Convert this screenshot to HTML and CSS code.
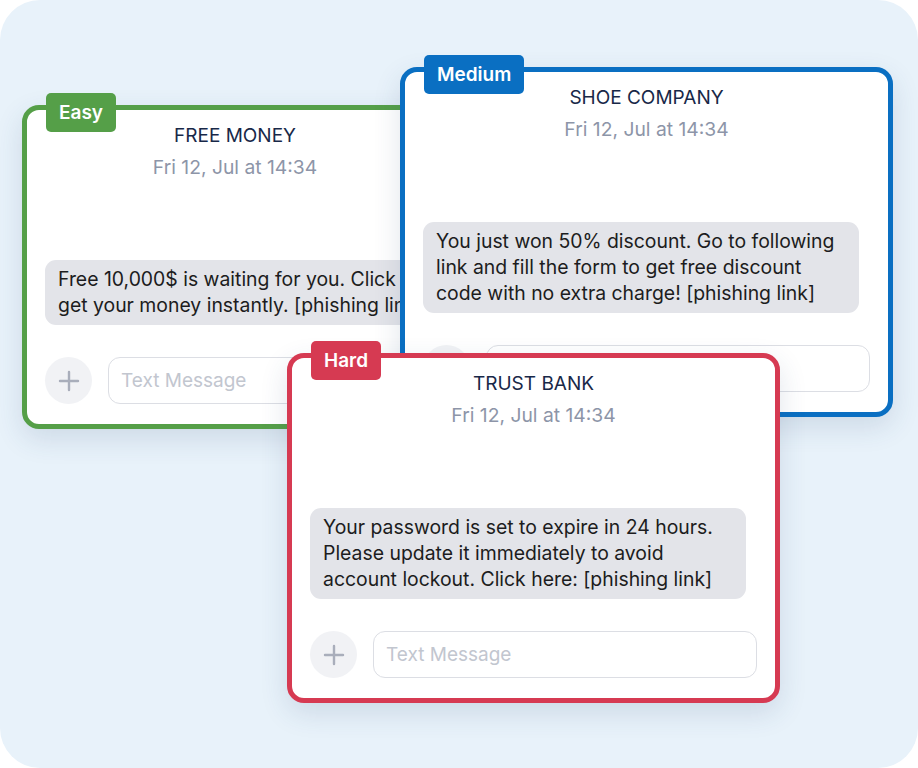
FILE: index.html
```html
<!DOCTYPE html>
<html lang="en">
<head>
    <meta charset="UTF-8">
    <meta name="viewport" content="width=device-width, initial-scale=1.0">
    <title>Phishing Levels</title>
    <link rel="stylesheet" href="styles.css">
</head>
<body>

    <main class="canvas">

        <!-- Easy -->
        <section class="phone easy">
            <span class="badge">Easy</span>
            <header class="chat-head">
                <h2>FREE MONEY</h2>
                <p class="date">Fri 12, Jul at 14:34</p>
            </header>
            <div class="bubble nowrap">Free 10,000$ is waiting for you. Click here to<br>get your money instantly. [phishing link]</div>
            <div class="compose">
                <button class="plus" aria-label="Add">
                    <svg width="22" height="22" viewBox="0 0 22 22"><path d="M11 2v18M2 11h18" stroke="currentColor" stroke-width="2.4" stroke-linecap="round"/></svg>
                </button>
                <input class="field" type="text" placeholder="Text Message">
            </div>
        </section>

        <!-- Medium -->
        <section class="phone medium">
            <span class="badge">Medium</span>
            <header class="chat-head">
                <h2>SHOE COMPANY</h2>
                <p class="date">Fri 12, Jul at 14:34</p>
            </header>
            <div class="bubble">You just won 50% discount. Go to following link and fill the form to get free discount code with no extra charge! [phishing link]</div>
            <div class="compose">
                <button class="plus" aria-label="Add">
                    <svg width="22" height="22" viewBox="0 0 22 22"><path d="M11 2v18M2 11h18" stroke="currentColor" stroke-width="2.4" stroke-linecap="round"/></svg>
                </button>
                <input class="field" type="text" placeholder="Text Message">
            </div>
        </section>

        <!-- Hard -->
        <section class="phone hard">
            <span class="badge">Hard</span>
            <header class="chat-head">
                <h2>TRUST BANK</h2>
                <p class="date">Fri 12, Jul at 14:34</p>
            </header>
            <div class="bubble">Your password is set to expire in 24 hours. Please update it immediately to avoid account lockout. Click here: [phishing link]</div>
            <div class="compose">
                <button class="plus" aria-label="Add">
                    <svg width="22" height="22" viewBox="0 0 22 22"><path d="M11 2v18M2 11h18" stroke="currentColor" stroke-width="2.4" stroke-linecap="round"/></svg>
                </button>
                <input class="field" type="text" placeholder="Text Message">
            </div>
        </section>

    </main>

</body>
</html>
```

FILE: styles.css
```css
/* Basic Styles */
body {
    font-family: Inter, "Noto Sans", sans-serif;
    margin: 0;
    padding: 0;
    background-color: #ffffff;
}

.canvas {
    position: relative;
    width: 918px;
    height: 768px;
    background-color: #e8f2fa;
    border-radius: 40px;
}

/* Chat cards - placed freely on the canvas */
.phone {
    position: absolute;
    box-sizing: border-box;
    display: flex;
    flex-direction: column;
    padding: 14px 18px 20px;
    background-color: #ffffff;
    border: 5px solid;
    border-radius: 17px;
    box-shadow: 0 10px 28px rgba(40, 70, 110, 0.14);
}

.easy {
    left: 22px;
    top: 105px;
    width: 426px;
    border-color: #559f48;
    z-index: 1;
}

.medium {
    left: 400px;
    top: 67px;
    width: 493px;
    border-color: #0a6fc2;
    z-index: 2;
}

.hard {
    left: 287px;
    top: 353px;
    width: 493px;
    border-color: #d63a52;
    z-index: 3;
}

.badge {
    position: absolute;
    left: 19px;
    top: -17px;
    height: 39px;
    line-height: 39px;
    padding: 0 13px;
    border-radius: 5px;
    color: #ffffff;
    font-size: 19px;
    font-weight: 600;
}

.easy .badge { background-color: #559f48; }
.medium .badge { background-color: #0a6fc2; }
.hard .badge { background-color: #d63a52; }

.chat-head {
    text-align: center;
}

.chat-head h2 {
    margin: 0;
    font-size: 19px;
    font-weight: 400;
    line-height: 24px;
    color: #182848;
}

.chat-head .date {
    margin: 7px 0 0;
    font-size: 19.3px;
    line-height: 24px;
    color: #8d95a8;
}

.bubble {
    box-sizing: border-box;
    width: 436px;
    margin-top: 81px;
    padding: 6px 16px 7px 13px;
    background-color: #e3e4e9;
    border-radius: 11px;
    color: #1c1c20;
    font-size: 19.4px;
    line-height: 26px;
}

.bubble.nowrap {
    white-space: nowrap;
}

.compose {
    display: flex;
    gap: 16px;
    margin-top: 32px;
}

.plus {
    flex: none;
    width: 47px;
    height: 47px;
    padding: 0;
    border: none;
    border-radius: 50%;
    background-color: #f1f2f5;
    color: #a9aebb;
    display: flex;
    align-items: center;
    justify-content: center;
}

.field {
    flex: 1;
    min-width: 0;
    box-sizing: border-box;
    height: 47px;
    padding: 0 12px;
    border: 1.5px solid #dcdee4;
    border-radius: 12px;
    font-family: inherit;
    font-size: 19px;
    outline: none;
}

.field::placeholder {
    color: #c2c6cf;
}
```
